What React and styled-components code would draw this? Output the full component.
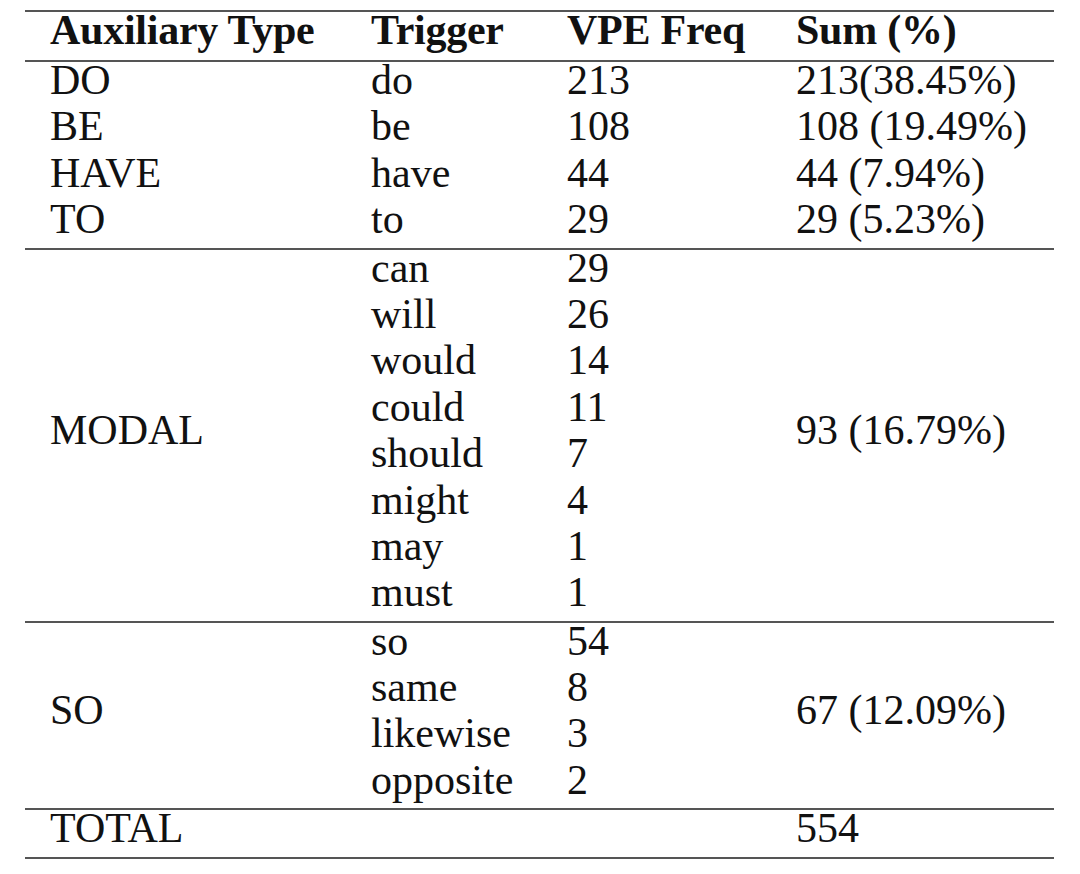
import React from "react";
import styled, { createGlobalStyle } from "styled-components";

const Global = createGlobalStyle`
  html, body {
    margin: 0;
    padding: 0;
    background: #ffffff;
  }
  body {
    font-family: "Liberation Serif", "Times New Roman", serif;
    color: #111111;
  }
`;

const Page = styled.div`
  padding: 10px 0 0 25px;
  width: 1080px;
  height: 874px;
  box-sizing: border-box;
  background: #ffffff;
`;

const Table = styled.table`
  border-collapse: separate;
  border-spacing: 0;
  table-layout: fixed;
  width: 1029px;
  font-family: "Liberation Serif", "Times New Roman", serif;
  font-size: 42px;
  color: #111111;
`;

const Rule = "2px solid #555555";

const HeadCell = styled.th`
  text-align: left;
  font-weight: 700;
  line-height: 37.7px;
  padding: 0 0 10.3px ${(p) => (p.$first ? "25px" : "0")};
  border-top: ${Rule};
  border-bottom: ${Rule};
  white-space: nowrap;
  letter-spacing: -0.25px;
`;

const Cell = styled.td`
  text-align: left;
  font-weight: 400;
  line-height: 37.7px;
  padding: 0 0 8.7px ${(p) => (p.$first ? "25px" : "0")};
  vertical-align: ${(p) => (p.$middle ? "middle" : "top")};
  border-top: ${(p) => (p.$ruleTop ? Rule : "none")};
  border-bottom: ${(p) => (p.$ruleBottom ? Rule : "none")};
  white-space: nowrap;
`;

const single = [
  ["DO", "do", "213", "213(38.45%)"],
  ["BE", "be", "108", "108 (19.49%)"],
  ["HAVE", "have", "44", "44 (7.94%)"],
  ["TO", "to", "29", "29 (5.23%)"],
];

const groups = [
  {
    type: "MODAL",
    sum: "93 (16.79%)",
    items: [
      ["can", "29"],
      ["will", "26"],
      ["would", "14"],
      ["could", "11"],
      ["should", "7"],
      ["might", "4"],
      ["may", "1"],
      ["must", "1"],
    ],
  },
  {
    type: "SO",
    sum: "67 (12.09%)",
    items: [
      ["so", "54"],
      ["same", "8"],
      ["likewise", "3"],
      ["opposite", "2"],
    ],
  },
];

export default function App() {
  return (
    <Page>
      <Global />
      <Table>
        <colgroup>
          <col style={{ width: 346 }} />
          <col style={{ width: 196 }} />
          <col style={{ width: 229 }} />
          <col style={{ width: 258 }} />
        </colgroup>
        <thead>
          <tr>
            <HeadCell $first>Auxiliary Type</HeadCell>
            <HeadCell>Trigger</HeadCell>
            <HeadCell>VPE Freq</HeadCell>
            <HeadCell>Sum (%)</HeadCell>
          </tr>
        </thead>
        <tbody>
          {single.map((r) => (
            <tr key={r[0]}>
              <Cell $first>{r[0]}</Cell>
              <Cell>{r[1]}</Cell>
              <Cell>{r[2]}</Cell>
              <Cell>{r[3]}</Cell>
            </tr>
          ))}
        </tbody>
        {groups.map((g) => (
          <tbody key={g.type}>
            {g.items.map((it, i) => (
              <tr key={it[0]}>
                {i === 0 && (
                  <Cell $first $middle $ruleTop rowSpan={g.items.length}>
                    {g.type}
                  </Cell>
                )}
                <Cell $ruleTop={i === 0}>{it[0]}</Cell>
                <Cell $ruleTop={i === 0}>{it[1]}</Cell>
                {i === 0 && (
                  <Cell $middle $ruleTop rowSpan={g.items.length}>
                    {g.sum}
                  </Cell>
                )}
              </tr>
            ))}
          </tbody>
        ))}
        <tbody>
          <tr>
            <Cell $first $ruleTop $ruleBottom>TOTAL</Cell>
            <Cell $ruleTop $ruleBottom></Cell>
            <Cell $ruleTop $ruleBottom></Cell>
            <Cell $ruleTop $ruleBottom>554</Cell>
          </tr>
        </tbody>
      </Table>
    </Page>
  );
}
